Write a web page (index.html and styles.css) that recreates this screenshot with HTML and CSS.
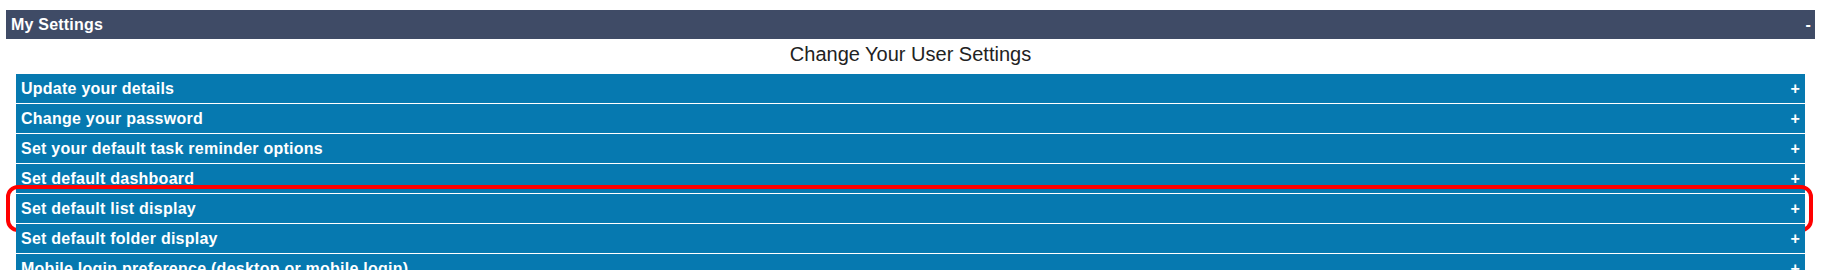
FILE: index.html
```html
<!DOCTYPE html>
<html>
<head>
    <link rel="stylesheet" href="styles.css">
</head>
<body>
    <div class="panel">
        <div class="panel-header">
            <span class="panel-title">My Settings</span>
            <span class="panel-toggle">-</span>
        </div>

        <div class="panel-body">
            <h2 class="settings-title">Change Your User Settings</h2>

            <div class="settings-list">
                <div class="settings-row">
                    <span>Update your details</span>
                    <span class="row-toggle">+</span>
                </div>
                <div class="settings-row">
                    <span>Change your password</span>
                    <span class="row-toggle">+</span>
                </div>
                <div class="settings-row">
                    <span>Set your default task reminder options</span>
                    <span class="row-toggle">+</span>
                </div>
                <div class="settings-row">
                    <span>Set default dashboard</span>
                    <span class="row-toggle">+</span>
                </div>
                <div class="settings-row highlighted">
                    <span>Set default list display</span>
                    <span class="row-toggle">+</span>
                    <span class="highlight-ring"></span>
                </div>
                <div class="settings-row">
                    <span>Set default folder display</span>
                    <span class="row-toggle">+</span>
                </div>
                <div class="settings-row">
                    <span>Mobile login preference (desktop or mobile login)</span>
                    <span class="row-toggle">+</span>
                </div>
            </div>
        </div>
    </div>
</body>
</html>
```

FILE: styles.css
```css
* {
    margin: 0;
    padding: 0;
    box-sizing: border-box;
}

body {
    font-family: "Liberation Sans", Arial, sans-serif;
    background-color: #ffffff;
    color: #222222;
    padding: 10px 7px 0 6px;
}

.panel-header {
    display: flex;
    justify-content: space-between;
    align-items: center;
    height: 29px;
    padding: 0 4px 0 5px;
    background: #3f4b66;
    color: #ffffff;
    font-size: 16px;
    font-weight: 700;
    letter-spacing: 0.2px;
    line-height: 29px;
}

.panel-body {
    padding: 0 10px;
}

.settings-title {
    font-size: 20px;
    font-weight: 400;
    line-height: 23px;
    text-align: center;
    padding: 4px 0 8px;
    color: #222222;
}

.settings-row {
    position: relative;
    display: flex;
    justify-content: space-between;
    align-items: center;
    height: 30px;
    padding: 0 5px;
    background: #0679b0;
    border-bottom: 1px solid #ffffff;
    color: #ffffff;
    font-size: 16px;
    font-weight: 700;
    letter-spacing: 0.25px;
    line-height: 29px;
}

.highlight-ring {
    position: absolute;
    top: -9px;
    bottom: -9px;
    left: -10px;
    right: -8px;
    border: 4px solid #ff0000;
    border-radius: 12px;
    pointer-events: none;
}
```
